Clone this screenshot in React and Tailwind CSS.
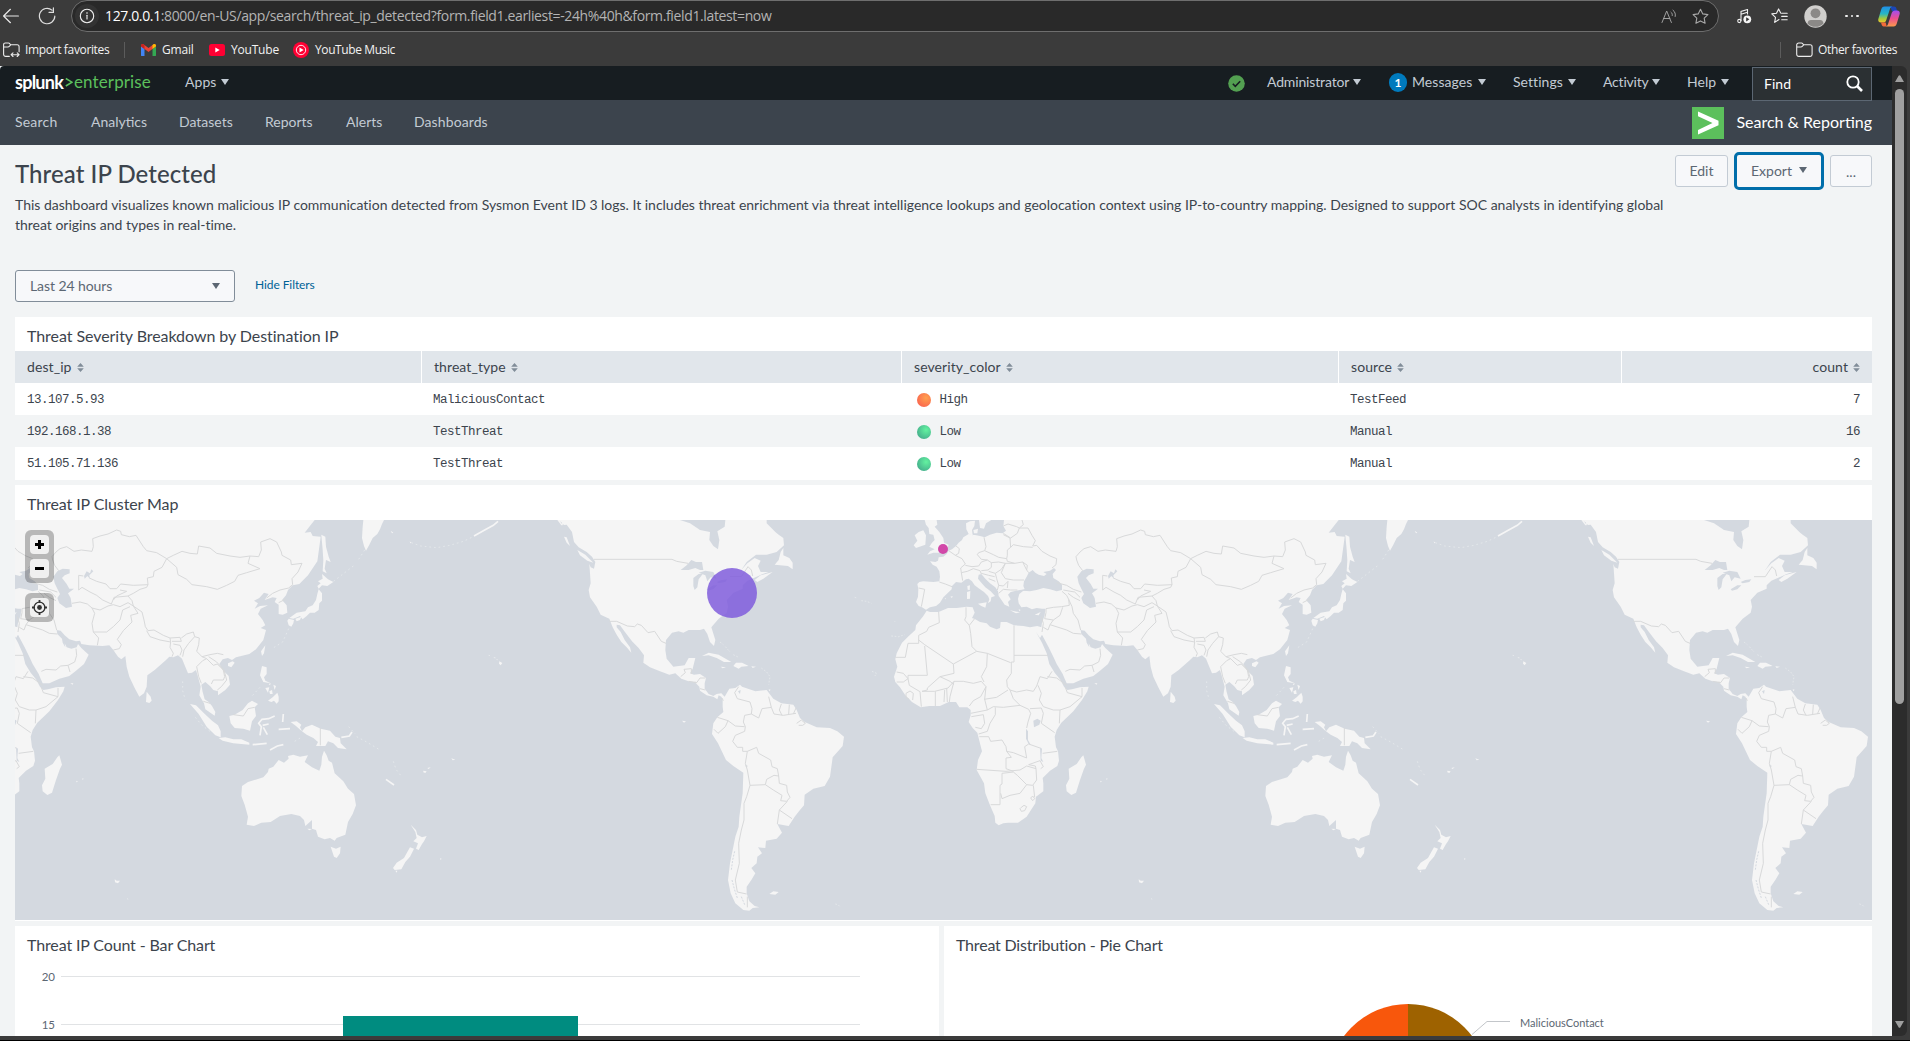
import React from "react";

const SANS = "font-['Lato','Open_Sans',sans-serif]";
const SEGOE = "font-['Open_Sans','Noto_Sans',sans-serif]";

const Caret = ({ className = "" }) => (
  <svg width="8" height="6" viewBox="0 0 8 6" className={`shrink-0 ${className}`} fill="currentColor">
    <path d="M0 0h8L4 6z" />
  </svg>
);

const BackIcon = () => (
  <svg width="16" height="16" viewBox="0 0 16 16" fill="none" stroke="#e8e8e8" strokeWidth="1.2" strokeLinecap="round" strokeLinejoin="round">
    <path d="M15.4 8H.6M7.4 1.3.6 8l6.8 6.7" />
  </svg>
);

const ReloadIcon = () => (
  <svg width="18" height="18" viewBox="0 0 18 18" fill="none" stroke="#dedede" strokeWidth="1.2" strokeLinecap="round">
    <path d="M16.8 9.2A7.7 7.7 0 1 1 14 3.1M15.4.9v4.4H11" />
  </svg>
);

const InfoIcon = () => (
  <svg width="16" height="16" viewBox="0 0 16 16" fill="none" stroke="#f0f0f0" strokeWidth="1.1">
    <circle cx="8" cy="8" r="6.7" />
    <path d="M8 7.2v3.8" strokeLinecap="round" />
    <circle cx="8" cy="5" r=".8" fill="#f0f0f0" stroke="none" />
  </svg>
);

const FolderIcon = ({ sync }) => (
  <svg width="17" height="16" viewBox="0 0 17 16" fill="none" stroke="#ededed" strokeWidth="1.1" strokeLinecap="round" strokeLinejoin="round" className="shrink-0">
    {sync ? (
      <>
        <path d="M6.3 14.4H2.7A2.1 2.1 0 0 1 .6 12.300V2.700A1.700 1.700 0 0 1 2.300 1h3.100c.7 0 1.100.3 1.500.8l.9 1h6.300a2 2 0 0 1 2 2v5M.8 5h4.100c.8 0 1.100-.3 1.600-.9l1.200-1.200" />
        <path d="M8.200 12.700h7.800M10 10.900l-1.900 1.800L10 14.500M14.200 10.900l1.900 1.800-1.900 1.800" />
      </>
    ) : (
      <path d="M.7 3A2 2 0 0 1 2.700 1h2.700c.7 0 1.100.3 1.500.8l.9 1h6.300a2 2 0 0 1 2 2v7.500a2.100 2.100 0 0 1-2.100 2.100H2.800A2.100 2.100 0 0 1 .7 12.300zM.8 5h4.100c.8 0 1.100-.3 1.600-.9l1.200-1.200" />
    )}
  </svg>
);

const GmailIcon = () => (
  <svg width="15" height="12" viewBox="0 0 15 12">
    <path d="M0 2v8.800A1 1 0 0 0 1 12h2.500V5z" fill="#4285f4" />
    <path d="M15 2v8.800a1 1 0 0 1-1 1.200h-2.500V5z" fill="#34a853" />
    <path d="M0 2.200V1.600C0 .2 1.600-.5 2.700.4l4.800 3.700L12.300.4C13.400-.5 15 .2 15 1.600v.6L7.500 8z" fill="#ea4335" />
    <path d="M11.500 1v4L15 2.300v-.7C15 .2 13.400-.5 12.300.4z" fill="#fbbc04" />
    <path d="M0 1.600v.8L3.500 5V1L2.700.4C1.600-.5 0 .2 0 1.600z" fill="#c5221f" />
  </svg>
);

const YoutubeIcon = () => (
  <svg width="16" height="12" viewBox="0 0 16 12">
    <rect width="16" height="12" rx="2.500" fill="#ff0033" />
    <path d="M6.300 3.500v5L10.700 6z" fill="#fff" />
  </svg>
);

const YoutubeMusicIcon = () => (
  <svg width="16" height="16" viewBox="0 0 16 16">
    <circle cx="8" cy="8" r="8" fill="#ff0033" />
    <circle cx="8" cy="8" r="4.700" fill="none" stroke="#fff" strokeWidth=".9" />
    <path d="M6.500 5.400v5.200L10.700 8z" fill="#fff" />
  </svg>
);

const ReadAloudIcon = () => (
  <svg width="16" height="15" viewBox="0 0 16 15" fill="none" stroke="#a0a0a0" strokeWidth="1" strokeLinecap="round" strokeLinejoin="round">
    <path d="M1 13.500 5.700 2l4.700 11.500M2.600 9.500h6.200M10 3.200c1 .8 1.500 2 1.300 3.300M12 1.200c2 1.500 2.800 4 2.200 6.300" />
  </svg>
);

const STAR = "M8.500 1.200l2.300 4.700 5.100.7-3.700 3.600.9 5.100-4.600-2.400-4.600 2.400.9-5.100L1.100 6.600l5.100-.7z";

const StarIcon = () => (
  <svg width="17" height="17" viewBox="0 0 17 17" fill="none" stroke="#a8a8a8" strokeWidth="1.100" strokeLinejoin="round">
    <path d={STAR} />
  </svg>
);

const FavoritesIcon = () => (
  <svg width="17" height="16" viewBox="0 0 17 16" fill="none" stroke="#f0f0f0" strokeWidth="1.100" strokeLinecap="round" strokeLinejoin="round">
    <path d="M8 11.500l-4.300 2.900.8-5L.8 5.900l4.700-.7L7.600.9l2.100 4.200M10.700 5.200h5.500M10.700 8.400h5.500M10.700 11.700h5.500" />
  </svg>
);

const MusicIcon = () => (
  <svg width="15" height="15" viewBox="0 0 15 15" fill="none" stroke="#f0f0f0" strokeWidth="1.100">
    <path d="M4 12V2.500l6.500-2v5M4 5.300l6.500-2" />
    <circle cx="2.300" cy="12" r="1.600" />
    <circle cx="10.300" cy="10.300" r="3.900" fill="#f5f5f5" stroke="none" />
    <path d="M9.200 8.200v4.200l3.200-2.100z" fill="#333" stroke="none" />
  </svg>
);

const AvatarIcon = () => (
  <svg width="23" height="23" viewBox="0 0 23 23">
    <circle cx="11.500" cy="11.500" r="11.200" fill="#d0cfcd" />
    <circle cx="11.500" cy="8.300" r="4.900" fill="#8b8987" />
    <path d="M3.500 18.500a11.200 11.200 0 0 0 16 0c-.3-2.400-1.500-3.500-3.500-3.500H7c-2 0-3.200 1.100-3.500 3.500z" fill="#8b8987" />
  </svg>
);

const CopilotIcon = () => (
  <svg width="22" height="21" viewBox="0 0 22 21">
    <defs>
      <linearGradient id="cpA" x1="0" y1="0" x2="0" y2="1">
        <stop offset="0" stopColor="#1f8fe8" />
        <stop offset=".45" stopColor="#27b6c4" />
        <stop offset=".75" stopColor="#a5c93c" />
        <stop offset="1" stopColor="#f3c62b" />
      </linearGradient>
      <linearGradient id="cpB" x1="0" y1="0" x2="0" y2="1">
        <stop offset="0" stopColor="#a24df0" />
        <stop offset=".5" stopColor="#ec4f8f" />
        <stop offset="1" stopColor="#fb9a4b" />
      </linearGradient>
    </defs>
    <path d="M16 .5c1.500 0 2.100.8 2.500 2.200l.8 2.600H14l-1.800-4.800z" fill="#1b46b8" />
    <path d="M6.500.5h7.700c-1.600.4-2 1.500-2.600 3.400L8.300 14c-.6 1.800-1.600 2.600-3.300 2.600H2.800C.7 16.600-.2 15 .4 12.800L3.200 3.500C3.800 1.500 4.700.5 6.500.5z" fill="url(#cpA)" />
    <path d="M15.500 20.500H7.800c1.600-.4 2-1.500 2.600-3.400L13.700 7c.6-1.800 1.600-2.600 3.300-2.600h2.200c2.100 0 3 1.600 2.400 3.800l-2.800 9.300c-.6 2-1.500 3-3.300 3z" fill="url(#cpB)" />
    <path d="M5.500 20.500c-1 0-1.600-.8-1.900-1.900l-.6-2h4.700l1 3.900z" fill="#f26b3a" />
  </svg>
);

function BrowserChrome() {
  return (
    <header className={`h-[66px] shrink-0 bg-[#3b3b3b] text-[#f2f2f2] ${SEGOE}`}>
      <div className="flex h-8 items-center pl-[3px]">
        <BackIcon />
        <div className="ml-[19px]"><ReloadIcon /></div>
        <div className="ml-[15px] flex h-8 w-[1648px] items-center rounded-full border border-[#6e6e6e] bg-[#292929] pl-[3px]">
          <div className="flex h-6 w-6 items-center justify-center rounded-full bg-[#333]"><InfoIcon /></div>
          <div className="ml-[6px] whitespace-nowrap text-[14px] leading-5 tracking-[-0.365px] text-[#b4b4b4]">
            <span className="text-white">127.0.0.1</span>:8000/en-US/app/search/threat_ip_detected?form.field1.earliest=-24h%40h&amp;form.field1.latest=now
          </div>
          <div className="ml-auto"><ReadAloudIcon /></div>
          <div className="ml-[15px] mr-[9px]"><StarIcon /></div>
        </div>
        <div className="ml-[18px]"><MusicIcon /></div>
        <div className="ml-[19px]"><FavoritesIcon /></div>
        <div className="ml-[16px]"><AvatarIcon /></div>
        <div className="ml-[18px] flex gap-[3px]">
          <i className="h-[2.500px] w-[2.500px] rounded-full bg-[#f0f0f0]" />
          <i className="h-[2.500px] w-[2.500px] rounded-full bg-[#f0f0f0]" />
          <i className="h-[2.500px] w-[2.500px] rounded-full bg-[#f0f0f0]" />
        </div>
        <div className="ml-[19px]"><CopilotIcon /></div>
      </div>
      <div className="mt-0.5 flex h-8 items-center pl-[3px] text-[12px] tracking-[-0.200px]">
        <FolderIcon sync />
        <span className="ml-[5px] w-[86px] whitespace-nowrap tracking-[-0.350px]">Import favorites</span>
        <i className="ml-[13px] h-4 w-px bg-[#5c5c5c]" />
        <div className="ml-[16px]"><GmailIcon /></div>
        <span className="ml-[6px] w-8 whitespace-nowrap">Gmail</span>
        <div className="ml-[15px]"><YoutubeIcon /></div>
        <span className="ml-[6px] w-[46px] whitespace-nowrap">YouTube</span>
        <div className="ml-[16px]"><YoutubeMusicIcon /></div>
        <span className="ml-[6px] whitespace-nowrap tracking-[-0.400px]">YouTube Music</span>
        <i className="ml-auto h-4 w-px bg-[#5c5c5c]" />
        <div className="ml-[15px]"><FolderIcon /></div>
        <span className="ml-[5px] mr-[12px] w-[80px] whitespace-nowrap tracking-[-0.350px]">Other favorites</span>
      </div>
    </header>
  );
}

const MenuItem = ({ label, className }) => (
  <div className={`flex items-center justify-between whitespace-nowrap ${className}`}>
    <span>{label}</span>
    <Caret />
  </div>
);

function SplunkBar() {
  return (
    <div className="flex h-[34px] items-center rounded-tl bg-[#171d21] pb-[3px] pl-[15px] text-[14px] tracking-[0.050px] text-[#c3cbd4]">
      <div className="flex w-[136px] items-center whitespace-nowrap text-[17px] leading-none">
        <b className="w-[50px] text-[18px] tracking-[-0.750px] text-white">splunk</b>
        <svg width="8" height="11" viewBox="0 0 8 11" className="mt-[2px]" fill="none" stroke="#5cc05c" strokeWidth="1.500">
          <path d="M.8 1.500 7 5.200.8 9" />
        </svg>
        <span className="ml-[1px] tracking-[0.120px] text-[#5cc05c]">enterprise</span>
      </div>
      <MenuItem label="Apps" className="ml-[34px] w-[44px]" />
      <svg width="17" height="17" viewBox="0 0 17 17" className="ml-auto mt-[3px]">
        <circle cx="8.500" cy="8.500" r="8.300" fill="#53a051" />
        <path d="m4.800 8.800 2.500 2.500 4.900-5" fill="none" stroke="#171d21" strokeWidth="1.600" />
      </svg>
      <MenuItem label="Administrator" className="ml-[22px] w-[94px] tracking-[-0.150px]" />
      <span className="ml-[28px] mt-[2px] flex h-[19px] w-[18px] items-center justify-center rounded-full bg-[#007abd] text-[12px] font-bold text-white">1</span>
      <MenuItem label="Messages" className="ml-[5px] w-[74px]" />
      <MenuItem label="Settings" className="ml-[27px] w-[63px]" />
      <MenuItem label="Activity" className="ml-[27px] w-[57px] tracking-[-0.200px]" />
      <MenuItem label="Help" className="ml-[27px] w-[42px]" />
      <div className="ml-[23px] mr-[20px] mt-[4px] flex h-[34px] w-[120px] items-center justify-between border border-[#5c6773] bg-[#2b3033] pl-[11px] pr-[8px] text-white">
        <span>Find</span>
        <svg width="17" height="17" viewBox="0 0 17 17" fill="none" stroke="#fff" strokeWidth="1.800">
          <circle cx="7" cy="7" r="5.700" />
          <path d="m11 11 5 5" strokeWidth="2.600" />
        </svg>
      </div>
    </div>
  );
}

function AppNav() {
  return (
    <div className="flex h-[45px] items-center bg-[#3c444d] pl-[15px] text-[14px] text-[#c3cbd4]">
      <span className="w-[76px] pb-[2px] tracking-[0.200px]">Search</span>
      <span className="w-[88px] pb-[2px]">Analytics</span>
      <span className="w-[86px] pb-[2px]">Datasets</span>
      <span className="w-[81px] pb-[2px]">Reports</span>
      <span className="w-[68px] pb-[2px]">Alerts</span>
      <span className="pb-[2px] tracking-[0.100px]">Dashboards</span>
      <svg width="32" height="32" viewBox="0 0 32 32" className="ml-auto">
        <rect width="32" height="32" fill="#5cc05c" />
        <path d="M6 4.500 26.500 13.800v4.400L6 27.500v-4.600L20.500 16 6 9.200z" fill="#fff" />
      </svg>
      <span className="ml-[12px] mr-[20px] w-[136px] whitespace-nowrap pb-[1px] text-right text-[16px] text-white">Search &amp; Reporting</span>
    </div>
  );
}

function PageHeader() {
  return (
    <div className="flex h-[125px] justify-between pt-[7px]">
      <div className="text-[#3c444d]">
        <h1 className="h-[43px] text-[24px] font-medium leading-[44px] tracking-[0.060px]">Threat IP Detected</h1>
        <p className="whitespace-nowrap text-[14px] leading-5 tracking-[-0.010px]">
          This dashboard visualizes known malicious IP communication detected from Sysmon Event ID 3 logs. It includes threat enrichment via threat intelligence lookups and geolocation context using IP-to-country mapping. Designed to support SOC analysts in identifying global
          <br />
          threat origins and types in real-time.
        </p>
      </div>
      <div className="-ml-[60px] flex h-[38px] items-center text-[14px] text-[#5c6773]">
        <div className="flex h-8 w-[53px] items-center justify-center rounded-[3px] border border-[#c3cbd4] bg-[#f7f8fa] pb-[2px]">Edit</div>
        <div className="ml-[6px] flex h-[38px] w-[90px] items-center justify-center gap-[7px] rounded-[5px] border-[3px] border-[#006eaa] bg-[#f7f8fa] pb-[2px]">Export <Caret /></div>
        <div className="ml-[6px] flex h-8 w-[42px] items-center justify-center rounded-[3px] border border-[#c3cbd4] bg-[#f7f8fa] pt-[1px]">...</div>
      </div>
    </div>
  );
}

const SortIcon = () => (
  <svg width="7" height="9" viewBox="0 0 7 9" className="ml-[5px] shrink-0" fill="#818d99">
    <path d="M3.500 0 6.800 3.800H.2zM3.500 9 .2 5.200h6.600z" />
  </svg>
);

const Severity = ({ level }) => (
  <span className="flex items-center gap-[9px] pl-[3.500px]">
    {level === "High" ? (
      <i className="-mt-px h-[14px] w-[14px] rounded-full bg-radial-[at_65%_35%] from-[#ffa04f] to-[#f9574f]" />
    ) : (
      <i className="-mt-px h-[14px] w-[14px] rounded-full bg-radial-[at_65%_35%] from-[#63f2a0] to-[#3d9d86]" />
    )}
    <span>{level}</span>
  </span>
);

const COLS = "grid grid-cols-[406px_480px_437px_283px_251px]";

const ROWS = [
  ["13.107.5.93", "MaliciousContact", "High", "TestFeed", "7"],
  ["192.168.1.38", "TestThreat", "Low", "Manual", "16"],
  ["51.105.71.136", "TestThreat", "Low", "Manual", "2"],
];

function SeverityTable() {
  const heads = ["dest_ip", "threat_type", "severity_color", "source", "count"];
  return (
    <section className="h-[163px] bg-white text-[#3c444d]">
      <h2 className="h-[34px] pl-3 pt-[3px] text-[16px] leading-[32px] tracking-[-0.060px]">Threat Severity Breakdown by Destination IP</h2>
      <div className={`${COLS} h-8 bg-[#e1e6eb] text-[14px] leading-[29px]`}>
        {heads.map((h, i) => (
          <div key={h} className={`flex items-center px-3 ${i ? "border-l border-white" : ""} ${i === 4 ? "justify-end" : ""}`}>
            <span className="-mt-[2px] tracking-[0.080px]">{h}</span>
            <SortIcon />
          </div>
        ))}
      </div>
      {ROWS.map((r, n) => (
        <div key={r[0]} className={`${COLS} h-8 items-center pt-[2px] font-['Liberation_Mono',monospace] text-[12.500px] tracking-[-0.500px] ${n === 1 ? "bg-[#f2f4f5]" : ""}`}>
          {r.map((c, i) => (
            <div key={i} className={`px-3 ${i === 4 ? "text-right" : ""}`}>{i === 2 ? <Severity level={c} /> : c}</div>
          ))}
        </div>
      ))}
    </section>
  );
}

/* Landmasses from Europe to the Pacific; map units are thirds of a pixel. */
const AFRO_EURASIA = `M372 30L370 48L378 62L368 70L350 68L330 74L314 82L300 78L285 75L272 74L266 72L250 82L246 90L236 98L228 108L216 118L206 122L200 132L190 140L176 142L174 152L166 156L150 154L158 164L170 170L178 184L180 200L178 214L160 216L130 214L118 216L112 222L115 236L114 260L108 276L116 288L126 292L138 299L150 292L168 288L180 278L190 262L204 248L215 238L216 228L228 216L244 218L258 208L266 206L276 214L284 226L298 236L312 246L324 258L328 268L324 280L332 274L334 262L345 258L332 244L316 232L304 218L294 206L296 194L304 192L316 206L330 220L346 232L354 244L356 258L366 272L374 284L388 290L384 276L392 268L384 254L392 246L408 242L420 240L434 238L430 228L432 214L440 200L446 188L458 180L466 188L476 194L492 198L500 192L490 186L510 182L522 174L528 180L518 192L520 204L536 214L546 224L546 240L530 244L510 238L490 234L470 240L450 244L430 242L418 252L414 266L416 280L424 292L440 290L456 298L470 294L486 296L496 296L494 316L486 338L484 352L472 348L450 352L430 348L402 346L380 336L362 336L360 354L350 358L330 350L320 340L300 336L286 328L276 324L284 308L278 292L260 290L230 294L204 294L176 306L150 306L140 302L130 318L108 346L106 360L84 380L66 398L50 430L46 448L52 470L42 500L46 516L60 532L76 556L96 576L122 592L148 588L180 588L206 576L228 576L238 592L262 592L272 600L272 616L266 636L278 654L292 668L298 692L306 724L294 750L290 780L312 820L316 850L330 886L344 918L346 938L356 946L370 940L384 938L414 938L440 920L466 880L468 860L490 844L490 820L488 804L510 782L532 768L537 752L534 724L528 712L524 680L530 660L544 638L580 604L606 570L622 544L626 530L600 532L576 538L562 540L552 530L540 508L524 488L508 462L500 430L486 398L468 366L480 384L486 374L506 412L520 440L530 462L548 492L554 506L560 520L580 520L610 506L640 498L660 482L684 462L698 434L676 414L666 402L662 412L646 416L632 412L626 400L628 412L620 398L618 386L604 372L602 360L614 362L626 376L640 388L660 394L672 392L676 402L700 406L740 408L760 406L772 420L786 440L796 448L808 438L812 470L820 500L836 534L850 560L864 550L872 530L874 496L896 480L930 450L940 440L952 442L966 436L978 446L986 466L996 490L1008 488L1020 480L1026 500L1034 530L1030 556L1044 580L1048 598L1076 617L1078 606L1068 588L1058 576L1046 568L1040 546L1036 524L1048 516L1062 528L1072 540L1086 544L1086 556L1108 540L1122 524L1118 498L1100 480L1090 462L1100 448L1116 444L1128 450L1140 442L1180 432L1200 418L1222 390L1230 360L1214 354L1228 346L1220 330L1206 312L1214 296L1236 286L1212 288L1196 296L1206 280L1194 272L1210 264L1224 248L1238 252L1226 270L1250 262L1262 264L1256 276L1268 284L1268 312L1280 314L1294 308L1292 286L1278 270L1290 256L1296 240L1310 226L1330 222L1356 196L1384 154L1390 110L1394 80L1370 78L1364 66L1346 68L1360 50L1376 30Z
M258 40L270 34L285 32L283 48L276 60L278 76L266 72L259 58ZM297 30L334 30L318 40L312 56L300 54ZM280 60L294 56L292 70L282 70Z
M134 30L170 30L172 44L164 50L178 66L190 84L192 98L206 104L200 122L180 128L160 128L142 134L150 124L164 118L148 110L156 98L164 90L160 74L148 72L146 54L138 44ZM104 76L116 66L130 61L138 76L136 104L108 114L101 106L112 92Z
M262 228L270 226L269 240L263 239ZM261 246L271 243L270 266L261 267ZM294 281L320 277L316 293L304 288ZM390 301L420 307L408 310ZM464 314L482 306L476 316ZM211 260L218 258L216 264ZM194 266L198 264L197 268ZM416 298L422 300L418 304Z
M610 736L618 764L612 776L600 810L588 848L574 855L560 844L558 826L568 806L566 776L590 762L604 742ZM872 545L884 560L887 572L880 579L870 576ZM1116 460L1130 454L1136 458L1126 472L1116 468ZM1228 406L1224 430L1218 438L1215 424Z
M643 520L652 520L650 524ZM660 812L666 815L662 817ZM679 805L683 806L680 810ZM776 1108L782 1112L792 1112L786 1120L777 1117ZM813 1165L818 1168L814 1168Z`;

const EAST = `M966 192L984 208L1000 216L982 228L966 226L956 236L952 228L962 220L954 214L968 206ZM956 238L966 250L966 272L958 280L956 300L944 308L930 308L920 318L908 328L900 318L880 326L868 324L890 308L916 304L924 292L938 286L948 270L952 252ZM866 326L882 330L880 340L874 350L866 346L862 332ZM886 326L904 320L900 330L890 334Z
M964 74L976 80L978 110L986 140L992 156L978 150L974 176L980 190L968 184L970 150L968 120ZM1090 30L1152 30L1146 42L1140 58L1132 72L1118 84L1108 104L1098 122L1092 108L1086 84L1088 50Z
M786 468L800 472L800 492L792 502L796 512L812 520L790 516L780 496ZM806 522L812 520L810 526ZM796 534L808 532L804 548ZM820 524L828 528L824 540ZM808 544L816 540L818 552L810 552ZM832 548L836 560L836 574L830 581L822 572L814 576L804 572L818 562Z
M688 618L704 614L728 600L744 580L756 572L774 582L764 592L768 618L756 634L750 662L730 656L704 654L692 640ZM570 582L588 586L612 610L636 632L654 646L662 664L662 682L646 676L620 650L596 612ZM656 684L676 682L700 688L724 688L748 698L748 704L700 700L668 692Z
M872 636L890 634L904 644L900 652L906 664L916 652L936 644L962 656L990 662L1006 680L1020 684L1022 700L1040 718L1014 714L1000 700L984 694L976 708L948 708L954 696L940 684L920 674L904 662L888 648Z
M972 722L980 736L986 752L996 758L1004 790L1030 814L1044 836L1062 852L1068 886L1058 912L1044 936L1036 974L1010 984L1004 992L990 984L974 988L954 980L948 960L936 956L936 930L916 948L912 930L900 918L874 912L840 918L812 936L784 938L762 948L740 944L744 920L734 884L724 858L726 828L744 816L790 802L804 786L806 776L820 770L836 750L852 758L866 746L864 738L880 734L900 740L924 736L914 756L936 772L958 782L964 764L966 740ZM922 956L936 957L928 961ZM992 1010L1008 1016L1022 1010L1020 1030L1010 1044L1002 1040Z
M1232 944L1248 960L1252 974L1266 982L1280 978L1272 994L1266 1002L1256 1020L1248 1016L1254 1000L1240 994L1250 984L1246 966ZM1230 1012L1242 1016L1230 1040L1216 1056L1204 1078L1184 1080L1179 1074L1190 1058L1212 1044L1224 1022ZM1186 1082L1192 1082L1190 1088Z
M1270 782L1280 784L1276 789L1270 787ZM1282 774L1292 772L1286 777ZM1354 745L1366 749L1358 751ZM1466 434L1470 437L1467 438ZM1480 441L1488 444L1484 445ZM1488 448L1494 449L1492 451ZM1498 454L1507 459L1502 466L1497 461ZM1172 62L1180 68L1176 70ZM1229 94L1234 98L1231 100ZM1320 1045L1325 1046L1322 1050Z`;

const EAST_CHAINS = `M780 676L784 650L776 640L786 628L806 626L824 618M788 646L806 642M790 652L802 674M850 612L848 636M836 658L870 656M1024 682L1048 678L1056 666M1158 808L1182 825M758 704L800 700M810 720L832 708L850 704M1422 78L1450 62L1480 46L1494 34`;

const EAST_DOTS = `M1094 120L1076 148M1060 168L998 216M1070 680L1100 696L1140 720M1180 754L1188 778L1202 796M780 532L756 558M866 356L848 396L816 416M1234 98L1262 108L1310 113L1350 106L1390 94L1420 80M548 514L548 542L556 570M884 694L904 682M586 622L606 646L630 664M1046 650L1066 672`;

const OLD_WATER = `M592 200L604 184L620 176L641 178L641 190L626 196L618 204L632 222L640 236L654 236L636 250L644 264L648 290L630 294L610 280L604 264L612 252L604 236L596 220ZM684 198L692 184L702 190L706 178L712 184L700 196L702 206L694 198L686 206ZM460 632L472 626L482 632L478 644L462 652ZM438 656L444 664L444 690L452 704L446 702L438 686ZM480 712L486 716L484 744L490 756L482 752ZM426 240L438 238L432 243Z`;

const OLD_BORDERS = `M178 216L196 222L216 230M116 234L134 238L128 270L124 290M206 122L226 136L246 146L256 162L242 174L244 188L248 212M228 108L238 116L236 130L226 136M256 166L276 170L296 168L304 156L322 150M312 82L318 110L314 122L296 128L292 134L304 148L322 150M370 74L390 84L392 112L382 120L382 136L380 146L356 142L340 134L314 122M244 188L262 184L280 176L300 182L304 192M322 150L334 158L334 172L324 180L304 182M334 158L356 156L376 160L364 178L346 190L326 184M376 160L404 160L428 156L440 180L446 188M376 160L364 188L376 206L400 210L432 210M346 190L350 206L356 226L370 228L384 214M304 190L326 196L344 200M326 206L346 214M356 226L352 240M356 250L370 238L392 240L412 240M384 214L382 234M428 156L442 166L440 180M392 112L400 104L430 110L458 112M370 48L384 42L410 50L418 54L444 54L456 76L466 92L458 108L470 106L486 124L510 138L530 146L528 164L516 174M418 54L412 70L392 84L370 70M426 30L430 44L418 54M380 146L382 154L404 160
M546 244L560 256L566 268L568 286L545 290L520 292L498 296M530 218L560 226L580 238L604 246M550 240L584 246L600 262M564 250L580 262L600 272M566 268L576 290L580 310L594 330L602 360M498 296L498 308L494 326L520 330L540 316L548 292M520 330L510 344L560 360L580 370L604 372M490 352L504 360L510 344M556 484L570 478L600 480L614 468L636 466L642 486M636 466L656 456L662 436L660 416M484 320L490 340L486 366
M176 306L178 338L146 352L140 364L116 376L116 390M46 442L76 442L84 400L116 400L116 390L134 404L220 462L290 424L322 430L392 458M258 292L258 320L254 330L268 346L272 370L276 410L290 424M268 346L284 326M402 346L402 436L504 436M402 436L402 456L394 456L394 490L380 510L382 530L390 540L410 546L440 540L460 544L470 528L480 500L502 506L516 484M220 462L222 490L180 500L142 534L142 540L126 544L164 544L204 534L222 514M134 408L142 496L84 496L84 506L70 490L50 486M322 430L320 470L304 500L312 516M222 514L250 514L280 520L304 514L318 530L302 560L280 572L268 588M222 514L210 560L208 576M180 500L210 514L222 524M200 534L202 576M194 540L192 576M166 544L166 588M120 545L124 590M98 570L100 550L90 543L78 550L78 562L88 568M50 516L70 516L84 506L88 526L120 545M312 568L350 562L384 540M318 530L314 568L322 600L272 610M322 600L340 590L370 592L420 586L400 566L390 540M474 526L484 550L478 570L490 590L520 600L540 600L570 590L606 560L606 534M502 500L530 504L560 526M556 532L562 548L606 560M484 594L490 610L484 640L524 668M540 600L538 640M420 586L446 598L452 610L444 636L440 654M450 596L484 594M274 620L310 614L314 640L304 656L286 652M346 592L346 614L330 640L322 664L296 672M298 680L326 680L332 694L366 690L378 710L380 724L400 728L440 744L434 710L446 702L480 714M380 724L394 742L378 744L378 776L400 784M290 778L378 784L420 780L440 768L468 776L470 810L458 826L440 824L412 796L400 786L366 790L366 822L360 826L360 884L332 884M440 824L420 850L390 856L366 866L362 850M468 776L466 768L446 764L480 752L490 770L482 776M488 730L532 724M460 826L464 862M424 892L432 886L440 890L434 902L424 904L420 896ZM452 864L458 858L464 866L458 872Z
M590 150L588 140L600 126L612 116L632 110L654 124L676 120L708 124L712 110L710 86L732 78L756 72L782 60L794 64L796 74L820 80L840 76L862 110L872 122L902 128L932 146L918 172L894 184L892 200L874 204L876 224L832 226L794 222L782 236L762 236L750 222L722 214L700 204M590 150L596 166L608 182M668 240L668 196L682 198M668 240L678 232L702 246L722 256L740 270L766 282M648 280L672 276L694 282L708 294L732 300L756 288L772 284L792 290L816 278L832 288M708 294L716 310L708 340L712 366L752 366L772 350L792 330L800 300L822 290M712 366L728 384L724 406M876 224L872 232L852 238L832 250L816 258M792 240L812 244L782 258L772 270M766 282L774 262L816 258L828 272L832 288L846 310L824 316L828 336L802 362L784 388L796 404L790 416L772 420M832 288L858 306L864 330L868 350L876 362L894 360L922 376L942 384L944 396L912 390L882 380L872 362M942 384L972 382L976 394L948 394M976 384L992 372L1012 366L1016 380L1030 384L1028 404L1022 424L1038 440L1052 446M980 440L984 420L998 400L1016 380M944 396L942 412L952 430L948 440M952 402L972 406L978 420L972 436M932 146L952 136L978 124L1002 130L1024 132L1028 108L1062 114L1082 130L1122 138L1152 142L1182 138L1176 160L1212 176L1172 188L1146 196L1136 214L1112 226L1084 238L1052 230L1008 224L992 208L966 194L962 172L932 146M1182 138L1208 140L1216 120L1214 96L1242 86L1262 96L1276 126L1278 136L1304 150L1306 164L1338 160L1326 186L1308 206L1310 224L1298 234L1272 240L1250 250L1232 264M1268 278L1288 268M1052 446L1040 452L1022 470L1028 500L1036 520M1052 446L1072 466L1084 462L1102 480L1106 500L1102 510L1072 510L1066 522M1038 440L1062 434L1084 430L1102 434M1058 440L1082 456L1104 480L1112 510L1096 530L1084 540M1132 614L1162 618L1176 596L1196 592M1393 654L1393 706M1042 574L1062 580`;

const AMERICAS = `M172 30L184 46L200 44L216 66L222 96L236 112L260 126L276 140L286 156L282 176L272 172L268 162L270 190L272 220L266 240L270 262L290 290L302 314L328 326L338 352L350 374L364 396L380 412L394 428L390 412L374 390L362 366L350 352L350 344L360 346L372 362L396 394L416 414L432 436L430 458L450 472L480 484L508 494L526 490L544 506L566 514L584 516L598 530L600 542L620 556L640 560L652 568L656 556L664 560L668 568L668 590L670 606L652 622L640 640L636 672L654 700L678 750L700 768L730 788L728 850L718 920L716 950L706 980L698 1020L690 1060L684 1110L692 1150L706 1180L730 1200L748 1202L758 1194L778 1192L764 1188L748 1174L740 1150L740 1130L754 1110L766 1090L754 1074L770 1060L772 1040L786 1030L774 1012L796 1014L798 992L830 986L846 968L832 942L866 948L884 920L898 902L912 886L914 854L940 836L974 828L990 800L998 742L1028 708L1032 680L1012 664L990 654L950 652L914 636L900 624L890 600L880 584L844 580L820 566L800 540L766 544L744 536L726 530L720 524L706 534L688 536L674 560L664 550L650 552L640 558L626 552L614 536L614 520L618 504L600 492L582 494L570 490L578 476L586 444L566 444L554 466L520 470L500 446L496 420L498 390L516 368L536 364L550 368L566 360L600 360L612 356L622 372L630 396L642 408L646 390L634 352L656 326L680 308L684 290L680 270L700 248L728 236L728 226L742 212L770 200L788 192L806 186L782 186L774 168L782 152L764 144L742 160L724 180L740 156L768 134L800 134L830 126L852 106L850 84L836 74L826 66L800 40L800 30L676 30L674 50L652 64L658 90L654 118L640 108L628 90L630 66L600 60L570 40L540 30Z
M850 114L850 136L868 144L878 158L878 178L864 168L824 164L836 150L842 126ZM232 120L256 134L280 158L262 152L240 136ZM192 80L200 82L210 108L200 98ZM764 210L782 196L818 186L790 206L772 216Z
M606 438L626 428L656 434L694 456L672 456L650 444L626 436ZM700 468L708 458L726 458L746 468L724 470L716 476ZM662 470L678 472L668 475ZM754 469L768 470L758 474ZM808 1152L820 1144L836 1146L826 1154ZM546 632L558 634L552 638ZM806 538L812 539L808 544Z`;

const AMERICAS_WATER = `M542 180L560 166L574 150L588 156L606 156L610 180L600 180L586 174L566 180ZM580 228L580 204L596 192L608 192L596 208L592 232L584 240ZM596 188L616 182L640 186L650 206L632 202L622 214L616 196ZM620 238L640 226L652 226L640 238L624 242ZM650 216L664 210L682 208L676 216L656 220ZM714 544L722 540L720 552ZM736 764L744 768L738 772ZM646 44L656 42L654 52Z`;

const AMERICAS_BORDERS = `M282 148L516 148L530 154L564 160M690 200L724 200L744 170L754 180L758 198M328 334L350 334L382 348L404 350L412 342L424 346L444 368L464 364L484 394L498 400M716 530L704 548L712 566L750 576L756 596L754 612L734 616L730 636L736 650L734 664L706 676L698 694L712 712L728 712L728 724M652 622L684 632L706 648L734 650M684 632L676 650L654 670L642 658M728 724L742 724L770 712L776 730L812 750L816 770L832 776L836 798M742 724L736 760L742 780L750 826L796 824L800 808L822 796L836 798L838 820L860 826L862 846L870 862L860 874L842 872L846 856L820 840L796 824M750 826L740 860L732 880L732 930L724 960L716 1000L718 1060L706 1110L712 1146L740 1152M742 1160L742 1192M862 874L838 900L832 942M838 900L876 926M754 612L776 624L786 596L814 592L806 560M814 592L822 612L850 616L888 610M844 582L838 600L846 616M868 584L866 612M888 594L880 612M542 500L556 488L552 478L574 476L574 492M566 514L590 518L600 504L616 504M584 516L590 518M600 536L616 540M666 564L670 572M890 640L904 630L916 640L908 646L896 646`;

const AMERICAS_DOTS = `M660 396L670 404M676 410L690 426M700 434L716 442M784 474L800 486L810 500L806 524M1006 1182L1014 1184L1022 1192M1064 262L1070 264M1084 272L1100 274L1114 280M1116 484L1134 492M1124 498L1130 492M1174 378L1196 380L1214 374M1184 334L1186 336`;

const AMERICAS_FJORDS = `M182 36L198 52L210 68M696 1110L704 1140L712 1164M704 1024L698 1050L694 1080M724 1160L734 1184`;

function ClusterMap() {
  return (
    <div className="relative h-[400px] bg-[#d4d9e0]">
      <svg width="1857" height="400" viewBox="45 30 5571 1200" className="block overflow-hidden">
        <defs>
          <g id="old-world">
            <path d={AFRO_EURASIA} fill="#f5f5f5" />
            <g transform="translate(432 0)">
              <path d={EAST} fill="#f5f5f5" />
              <path d={EAST_CHAINS} fill="none" stroke="#f5f5f5" strokeWidth="5" />
              <path d={EAST_DOTS} fill="none" stroke="#e6e9ec" strokeWidth="2.500" strokeDasharray="5 9" />
            </g>
            <path d={OLD_WATER} fill="#d4d9e0" />
            <path d={OLD_BORDERS} fill="none" stroke="#d8d9da" strokeWidth="3" strokeLinejoin="round" />
          </g>
          <g id="new-world">
            <path d={AMERICAS} fill="#f5f5f5" />
            <path d={AMERICAS_WATER} fill="#d4d9e0" />
            <path d={AMERICAS_FJORDS} fill="none" stroke="#d4d9e0" strokeWidth="3" strokeDasharray="6 4" />
            <path d={AMERICAS_BORDERS} fill="none" stroke="#d8d9da" strokeWidth="3" strokeLinejoin="round" />
            <path d={AMERICAS_DOTS} fill="none" stroke="#e6e9ec" strokeWidth="2.500" strokeDasharray="5 5" />
          </g>
        </defs>
        <use href="#old-world" x="-432" />
        <use href="#old-world" x="2640" />
        <use href="#new-world" x="1500" />
        <use href="#new-world" x="4572" />
        <circle cx="2196" cy="249" r="75" fill="#7c58dc" fillOpacity=".82" />
        <circle cx="2829" cy="117" r="15" fill="#d041a6" fillOpacity=".96" />
      </svg>
      <div className="absolute left-[10px] top-[10px] flex flex-col gap-[10px]">
        <div className="flex flex-col gap-[5px] rounded-[6px] bg-black/25 p-[5px]">
          <div className="flex h-[19px] w-[19px] items-center justify-center rounded bg-[#f0f0f0]">
            <svg width="9" height="9" viewBox="0 0 9 9"><path d="M3 0h3v3h3v3H6v3H3V6H0V3h3z" /></svg>
          </div>
          <div className="flex h-[19px] w-[19px] items-center justify-center rounded bg-[#f0f0f0]">
            <svg width="9" height="3" viewBox="0 0 9 3"><path d="M0 0h9v3H0z" /></svg>
          </div>
        </div>
        <div className="rounded-[6px] bg-black/25 p-[5px]">
          <div className="flex h-[19px] w-[19px] items-center justify-center rounded bg-[#f0f0f0]">
            <svg width="15" height="15" viewBox="0 0 15 15" fill="none" stroke="#333" strokeWidth="1.300">
              <circle cx="7.500" cy="7.500" r="5.400" />
              <circle cx="7.500" cy="7.500" r="2.400" fill="#333" stroke="none" />
              <path d="M7.500 0v3M7.500 12v3M0 7.500h3M12 7.500h3" strokeWidth="1.800" />
            </svg>
          </div>
        </div>
      </div>
    </div>
  );
}

function BarPanel() {
  return (
    <section className="h-[110px] w-[924px] overflow-hidden bg-white text-[#3c444d]">
      <h2 className="h-[34px] pl-3 pt-[3px] text-[16px] leading-[32px] tracking-[-0.130px]">Threat IP Count - Bar Chart</h2>
      <svg width="924" height="76" viewBox="0 0 924 76" className={`block ${SANS}`}>
        <path d="M46 16.500H845M46 64.500H845" stroke="#e1e3e5" />
        <rect x="328" y="56" width="235" height="30" fill="#008c80" />
        <g fontSize="11.500" fill="#5c6773" textAnchor="end">
          <text x="40" y="21">20</text>
          <text x="40" y="69">15</text>
        </g>
      </svg>
    </section>
  );
}

function PiePanel() {
  return (
    <section className="h-[110px] w-[928px] overflow-hidden bg-white text-[#3c444d]">
      <h2 className="h-[34px] pl-3 pt-[3px] text-[16px] leading-[32px] tracking-[-0.190px]">Threat Distribution - Pie Chart</h2>
      <svg width="928" height="76" viewBox="0 0 928 76" className={`block ${SANS}`}>
        <path d="M464 124V44a80 80 0 0 1 80 80z" fill="#9e6200" />
        <path d="M464 124V44a80 80 0 0 0-80 80z" fill="#f8570c" />
        <path d="M528 74.500 543 61.500H566" fill="none" stroke="#c3c6ca" />
        <text x="576" y="66.500" fontSize="11" fill="#5c6773">MaliciousContact</text>
      </svg>
    </section>
  );
}

function Scrollbar() {
  return (
    <div className="flex h-[970px] w-[15px] flex-col items-center rounded-r-[6px] bg-[#2c2c2c] pt-[9px]">
      <svg width="9" height="7" viewBox="0 0 9 7" fill="#9f9f9f"><path d="M3.600.8a1 1 0 0 1 1.800 0L9 7H0z" /></svg>
      <div className="mt-[7px] h-[615px] w-[9px] rounded-full bg-[#9f9f9f]" />
      <svg width="9" height="7" viewBox="0 0 9 7" fill="#9f9f9f" className="mb-[8px] mt-auto"><path d="M0 0h9L5.400 6.200a1 1 0 0 1-1.800 0z" /></svg>
    </div>
  );
}

export default function App() {
  return (
    <div className="flex h-[1041px] w-[1910px] flex-col overflow-hidden border-b border-black bg-[#3b3b3b]">
      <BrowserChrome />
      <div className="flex h-[970px]">
        <main className={`h-[970px] w-[1892px] overflow-hidden bg-[#f2f4f5] ${SANS}`}>
          <SplunkBar />
          <AppNav />
          <div className="w-[1872px] pl-[15px]">
            <PageHeader />
            <div className="flex h-[47px] items-start">
              <div className="flex h-8 w-[220px] items-center justify-between rounded-[3px] border border-[#818d99] bg-[#f7f8fa] pl-[14px] pr-[14px] text-[14px] text-[#5c6773]">
                <span className="-mt-[2px] tracking-[-0.080px]">Last 24 hours</span>
                <Caret />
              </div>
              <span className="ml-5 text-[12px] leading-[30px] tracking-[-0.080px] text-[#006297]">Hide Filters</span>
            </div>
            <SeverityTable />
            <section className="mt-[5px] bg-white pb-px">
              <h2 className="h-[35px] pl-3 pt-[3px] text-[16px] leading-[32px] tracking-[-0.090px] text-[#3c444d]">Threat IP Cluster Map</h2>
              <ClusterMap />
            </section>
            <div className="mt-[5px] flex gap-[5px]">
              <BarPanel />
              <PiePanel />
            </div>
          </div>
        </main>
        <Scrollbar />
      </div>
    </div>
  );
}
